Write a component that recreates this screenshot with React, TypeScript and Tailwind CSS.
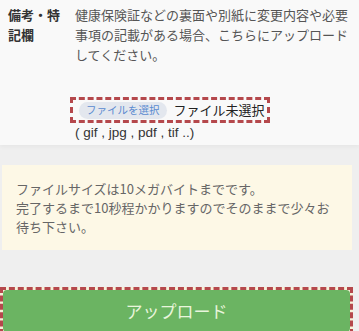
const jp = { fontFamily: '"Noto Sans CJK JP", "Noto Sans", sans-serif' };

export default function App() {
  return (
    <div className="w-[359px] h-[331px] overflow-hidden bg-[#efefef]" style={jp}>
      {/* 備考欄 */}
      <section className="flex bg-[#f9f9f9] pl-2 pt-[5px] h-[145px] shadow-[0_2px_4px_rgba(0,0,0,0.04)]">
        <div className="w-[58px] shrink-0 text-[13px] leading-[20px] font-bold text-[#333]">備考・特記欄</div>
        <div className="ml-[9px] flex-1 pr-2">
          <p className="text-[13px] leading-[20px] text-[#555]">
            健康保険証などの裏面や別紙に変更内容や必要事項の記載がある場合、こちらにアップロードしてください。
          </p>
          <div className="mt-[32px] -ml-[5px] flex h-[26px] w-[200px] items-center border-[3px] border-dashed border-[#b5484c] pl-[6px]">
            <span className="flex h-[17px] items-center rounded-full bg-[#e3e7ee] px-[7px] text-[10.5px] text-[#5a8ad0]">
              ファイルを選択
            </span>
            <span className="ml-[7px] text-[13px] text-[#222]">ファイル未選択</span>
          </div>
          <p className="mt-[1px] text-[13.5px] leading-[18px] text-[#333]" style={{ fontFamily: '"Liberation Sans", "Noto Sans CJK JP", sans-serif' }}>
            ( gif , jpg , pdf , tif ..)
          </p>
        </div>
      </section>

      {/* 注意書き */}
      <div className="ml-[2px] mt-[20px] h-[85px] w-[350px] bg-[#fdf8e6] pl-[14px] pr-[18px] pt-[14px] text-[13px] leading-[19px] text-[#666]">
        ファイルサイズは10メガバイトまでです。
        <br />
        完了するまで10秒程かかりますのでそのままで少々お待ち下さい。
      </div>

      {/* アップロード */}
      <div className="mt-[37px] h-[48px] w-[353px] border-[3px] border-dashed border-[#b5484c] bg-[#f6f1d8]">
        <button className="flex h-full w-full items-center justify-center rounded-[4px] bg-[#6bb462] text-[17px] text-[#e9f5dc]">
          アップロード
        </button>
      </div>
    </div>
  );
}
